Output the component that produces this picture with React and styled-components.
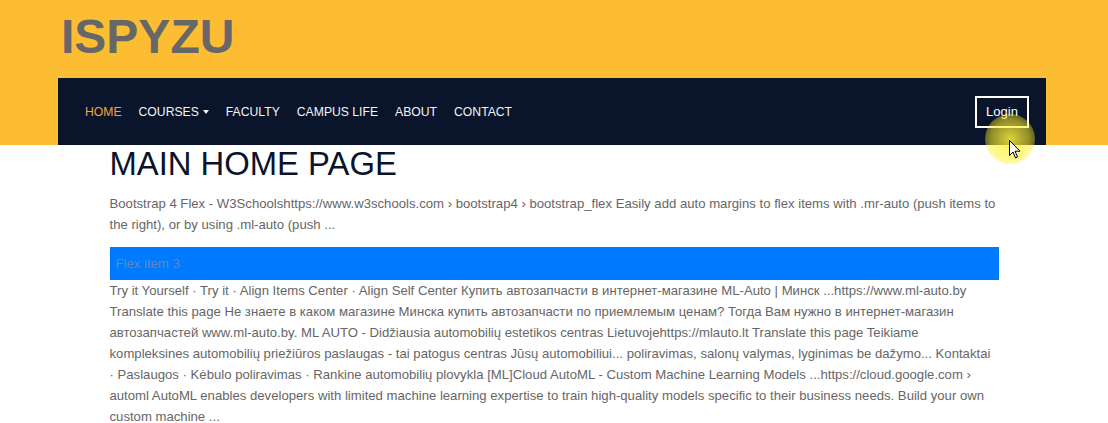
import React from "react";
import styled, { createGlobalStyle } from "styled-components";

const GlobalStyle = createGlobalStyle`
    body {
        margin: 0;
        background: #ffffff;
        font-family: "Liberation Sans", Arial, sans-serif;
    }
`;

const Page = styled.div`
    position: relative;
    width: 1108px;
    min-height: 423px;
    overflow: hidden;
`;

const Header = styled.header`
    background: #fdbd33;
`;

const HeaderInner = styled.div`
    margin: 0 62px 0 58px;
`;

const Logo = styled.h1`
    margin: 0;
    height: 78px;
    box-sizing: border-box;
    padding: 13px 0 0 3px;
    font-size: 48px;
    line-height: 1;
    font-weight: 700;
    color: #676767;
`;

const Navbar = styled.nav`
    display: flex;
    align-items: center;
    justify-content: space-between;
    height: 67px;
    padding: 0 17px 0 27px;
    background: #0a142a;
`;

const NavList = styled.ul`
    display: flex;
    align-items: center;
    gap: 17px;
    margin: 0;
    padding: 0;
    list-style: none;
`;

const NavLink = styled.a`
    display: flex;
    align-items: center;
    font-size: 12.2px;
    color: ${(p) => (p.$active ? "#f0a53c" : "#f4f4f4")};
    text-decoration: none;
    cursor: pointer;
`;

const Caret = styled.span`
    display: inline-block;
    margin-left: 4px;
    border-top: 4px solid #f4f4f4;
    border-left: 3.5px solid transparent;
    border-right: 3.5px solid transparent;
`;

const LoginButton = styled.button`
    width: 54px;
    height: 32px;
    padding: 0;
    background: transparent;
    border: 2px solid #ffffff;
    color: #ffffff;
    font-family: inherit;
    font-size: 13px;
`;

const Main = styled.main`
    width: 889px;
    margin: 0 auto;
`;

const Title = styled.h2`
    margin: 0 0 10px;
    font-size: 32.8px;
    line-height: 38px;
    font-weight: 400;
    color: #0a142a;
`;

const Text = styled.p`
    margin: 0 0 ${(p) => p.$gap || 0}px;
    font-size: 13.15px;
    line-height: 21px;
    color: #666666;
`;

const FlexBar = styled.div`
    padding: 6px 6px;
    background: #007bff;
    font-size: 13.15px;
    line-height: 21px;
    color: #6584bd;
`;

const CursorGlow = styled.div`
    position: absolute;
    left: 985px;
    top: 114px;
    width: 50px;
    height: 50px;
    border-radius: 50%;
    background: radial-gradient(circle, rgba(255, 245, 60, 0.85) 0%, rgba(255, 240, 40, 0.55) 55%, rgba(255, 240, 40, 0) 100%);
    pointer-events: none;
`;

const Pointer = styled.svg`
    position: absolute;
    left: 1009px;
    top: 140px;
    pointer-events: none;
`;

const links = ["HOME", "COURSES", "FACULTY", "CAMPUS LIFE", "ABOUT", "CONTACT"];

export default function App() {
    return (
        <Page>
            <GlobalStyle />
            <Header>
                <HeaderInner>
                    <Logo>ISPYZU</Logo>
                    <Navbar>
                        <NavList>
                            {links.map((label, i) => (
                                <li key={label}>
                                    <NavLink $active={i === 0}>
                                        {label}
                                        {label === "COURSES" && <Caret />}
                                    </NavLink>
                                </li>
                            ))}
                        </NavList>
                        <LoginButton>Login</LoginButton>
                    </Navbar>
                </HeaderInner>
            </Header>
            <Main>
                <Title>MAIN HOME PAGE</Title>
                <Text $gap={12}>
                    Bootstrap 4 Flex - W3Schoolshttps://www.w3schools.com › bootstrap4 › bootstrap_flex Easily add auto margins to flex items with .mr-auto (push items to the right), or by using .ml-auto (push ...
                </Text>
                <FlexBar>Flex item 3</FlexBar>
                <Text>
                    Try it Yourself · Try it · Align Items Center · Align Self Center Купить автозапчасти в интернет-магазине ML-Auto | Минск ...https://www.ml-auto.by Translate this page Не знаете в каком магазине Минска купить автозапчасти по приемлемым ценам? Тогда Вам нужно в интернет-магазин автозапчастей www.ml-auto.by. ML AUTO - Didžiausia automobilių estetikos centras Lietuvojehttps://mlauto.lt Translate this page Teikiame kompleksines automobilių priežiūros paslaugas - tai patogus centras Jūsų automobiliui... poliravimas, salonų valymas, lyginimas be dažymo... Kontaktai ·{"\u00A0"}Paslaugos · Kėbulo poliravimas · Rankine automobilių plovykla [ML]Cloud AutoML - Custom Machine Learning Models ...https://cloud.google.com › automl AutoML enables developers with limited machine learning expertise to train high-quality models specific to their business needs. Build your own custom machine ...
                </Text>
            </Main>
            <CursorGlow />
            <Pointer width="12" height="19" viewBox="0 0 12 19">
                <path d="M0.5 0.5 L0.5 15.5 L4 12 L6.5 18 L8.5 17 L6 11.2 L11 11.2 Z" fill="#ffffff" stroke="#000000" strokeWidth="1" strokeLinejoin="round" />
            </Pointer>
        </Page>
    );
}
